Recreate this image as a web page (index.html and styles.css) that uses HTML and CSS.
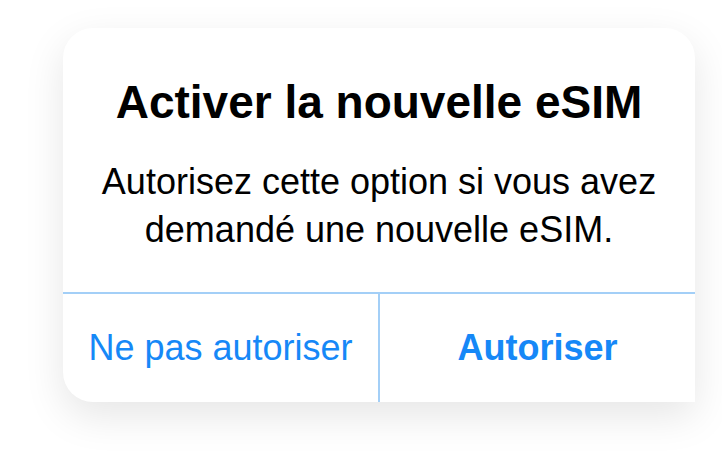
FILE: index.html
```html
<!DOCTYPE html>
<html lang="fr">

<head>
    <meta charset="UTF-8">
    <meta name="viewport" content="width=device-width, initial-scale=1.0">
    <title>Activer la nouvelle eSIM</title>
    <link rel="stylesheet" href="styles.css">
</head>

<body>

    <div class="alert">
        <div class="alert-body">
            <h1 class="alert-title">Activer la nouvelle eSIM</h1>
            <p class="alert-text">Autorisez cette option si vous avez demandé une nouvelle eSIM.</p>
        </div>
        <div class="alert-actions">
            <button type="button" class="btn">Ne pas autoriser</button>
            <button type="button" class="btn btn-main">Autoriser</button>
        </div>
    </div>

</body>

</html>
```

FILE: styles.css
```css
html,
body {
    min-height: 467px;
}

body {
    margin: 0;
    padding: 28px 0 0 63px;
    box-sizing: border-box;
    background-color: #fff;
    font-family: "Liberation Sans", Arial, sans-serif;
}

.alert {
    width: 632px;
    background-color: #fff;
    border-radius: 30px 30px 0 30px;
    box-shadow: 0 14px 40px rgba(0, 0, 0, 0.1);
    overflow: hidden;
}

.alert-body {
    padding: 46px 20px 38px;
    text-align: center;
}

.alert-title {
    margin: 0;
    font-size: 46px;
    line-height: 56px;
    font-weight: bold;
    color: #000;
}

.alert-text {
    margin: 28px auto 0;
    max-width: 580px;
    font-size: 36px;
    line-height: 48px;
    color: #000;
}

.alert-actions {
    display: flex;
    border-top: 2px solid #a3cff7;
}

.btn {
    flex: 1;
    height: 108px;
    padding: 0;
    border: none;
    background: none;
    font-family: inherit;
    font-size: 36px;
    color: #1688f7;
    cursor: pointer;
}

.btn + .btn {
    border-left: 2px solid #a3cff7;
}

.btn-main {
    font-weight: bold;
}
```
